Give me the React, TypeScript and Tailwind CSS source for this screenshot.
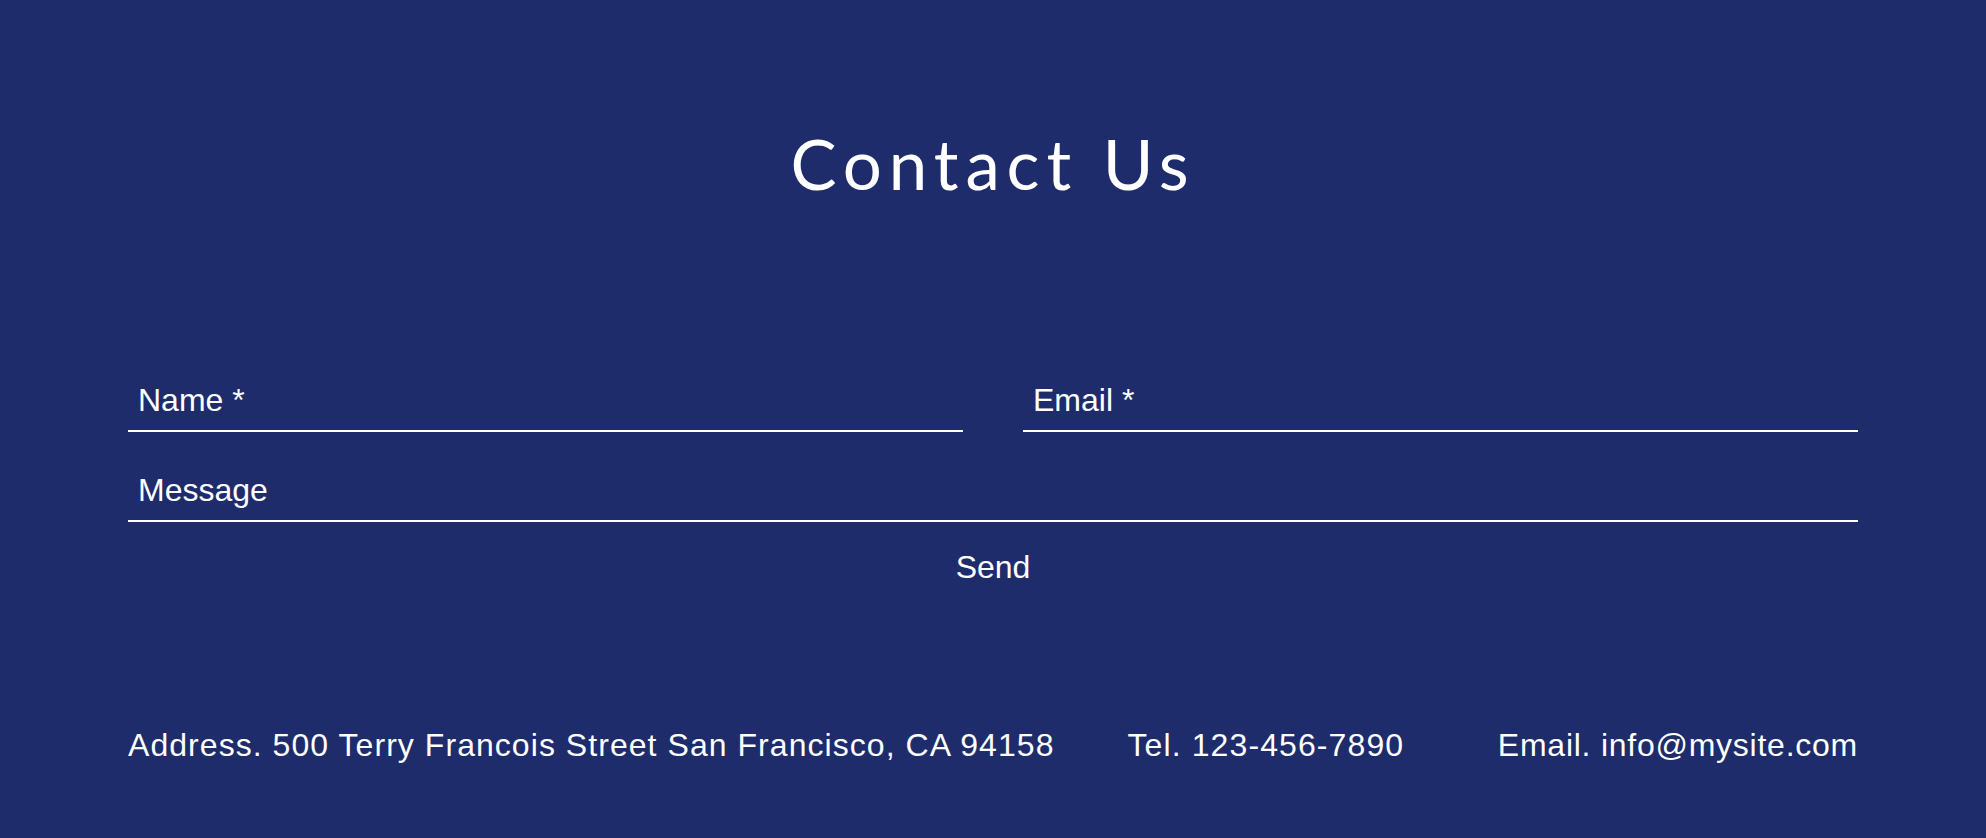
import { useState } from 'react';

const fields = [
  { key: 'name', label: 'Name *', type: 'text' },
  { key: 'email', label: 'Email *', type: 'email' },
];

export default function App() {
  const [values, setValues] = useState<Record<string, string>>({ name: '', email: '', message: '' });

  const update = (key: string, v: string) => setValues((prev) => ({ ...prev, [key]: v }));

  return (
    <div className="min-h-[838px] bg-[#1e2c6b] text-white font-['Liberation_Sans',Arial,sans-serif]">
      {/* Title */}
      <h1 className="pt-[129px] text-center font-['Lato',sans-serif] text-[69px] leading-none font-normal tracking-[0.1em]">
        Contact Us
      </h1>

      {/* Form */}
      <form className="mx-[128px] mt-[173px]" onSubmit={(e) => e.preventDefault()}>
        <div className="grid grid-cols-2 gap-x-[60px]">
          {fields.map((f) => (
            <input
              key={f.key}
              type={f.type}
              value={values[f.key]}
              onChange={(e) => update(f.key, e.target.value)}
              placeholder={f.label}
              className="h-[61px] w-full border-b-2 border-white bg-transparent px-[10px] text-[32px] outline-none placeholder:text-white"
            />
          ))}
        </div>
        <input
          type="text"
          value={values.message}
          onChange={(e) => update('message', e.target.value)}
          placeholder="Message"
          className="mt-[29px] h-[61px] w-full border-b-2 border-white bg-transparent px-[10px] text-[32px] outline-none placeholder:text-white"
        />
        <div className="mt-[27px] flex justify-center">
          <button type="submit" className="cursor-pointer text-[32px] leading-[37px]">
            Send
          </button>
        </div>
      </form>

      {/* Footer info */}
      <div className="mx-[128px] mt-[141px] flex text-[32px] leading-[37px]">
        <span className="tracking-[1.05px]">Address. 500 Terry Francois Street San Francisco, CA 94158</span>
        <span className="ml-[73px] tracking-[1.1px]">Tel. 123-456-7890</span>
        <span className="ml-auto tracking-[0.75px]">Email. info@mysite.com</span>
      </div>
    </div>
  );
}
